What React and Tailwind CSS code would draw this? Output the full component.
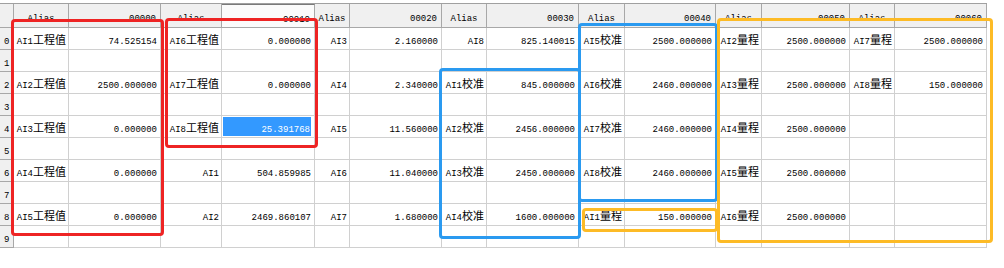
import React from "react";

const headers = ["Alias", "00000", "Alias", "00010", "Alias", "00020", "Alias", "00030", "Alias", "00040", "Alias", "00050", "Alias", "00060"];

const data = {
  0: ["AI1工程值", "74.525154", "AI6工程值", "0.000000", "AI3", "2.160000", "AI8", "825.140015", "AI5校准", "2500.000000", "AI2量程", "2500.000000", "AI7量程", "2500.000000"],
  2: ["AI2工程值", "2500.000000", "AI7工程值", "0.000000", "AI4", "2.340000", "AI1校准", "845.000000", "AI6校准", "2460.000000", "AI3量程", "2500.000000", "AI8量程", "150.000000"],
  4: ["AI3工程值", "0.000000", "AI8工程值", "25.391768", "AI5", "11.560000", "AI2校准", "2456.000000", "AI7校准", "2460.000000", "AI4量程", "2500.000000", "", ""],
  6: ["AI4工程值", "0.000000", "AI1", "504.859985", "AI6", "11.040000", "AI3校准", "2450.000000", "AI8校准", "2460.000000", "AI5量程", "2500.000000", "", ""],
  8: ["AI5工程值", "0.000000", "AI2", "2469.860107", "AI7", "1.680000", "AI4校准", "1600.000000", "AI1量程", "150.000000", "AI6量程", "2500.000000", "", ""],
};

function Txt({ s }) {
  const m = s.match(/^([A-Za-z0-9.]*)(.*)$/);
  return (
    <span className="whitespace-nowrap leading-none">
      <span className="text-[9px] font-['Liberation_Mono',monospace]">{m[1]}</span>
      {m[2] && (
        <span className="text-[11px] font-['Noto_Sans_CJK_SC',sans-serif]">{m[2]}</span>
      )}
    </span>
  );
}

const gridCols =
  "grid-cols-[14px_55px_92px_61px_93px_35px_92px_45px_92px_46px_91px_46px_88px_45px_92px]";

export default function App() {
  const rows = Array.from({ length: 10 }, (_, i) => i);
  return (
    <div className="relative w-[1004px] h-[268px] bg-white overflow-hidden text-black">
      <div className="pt-[3px] w-[987px]">
        <div className={`grid ${gridCols} border-t border-[#a0a0a0]`}>
          <div className="h-[24px] bg-[#f0f0f0] border-r border-b border-[#a8a8a8]" />
          {headers.map((h, i) => (
            <div
              key={i}
              className={`h-[24px] flex items-center border-r border-b border-[#a8a8a8] ${
                i === 3 ? "bg-[#fbfbfb] border-t border-t-[#7a7a7a]" : "bg-[#f0f0f0]"
              } ${h === "Alias" ? "justify-center" : "justify-end pr-[4px]"}`}
            >
              <Txt s={h} />
            </div>
          ))}
          {rows.map((r) => (
            <React.Fragment key={r}>
              <div className="h-[22px] flex items-center pl-[4px] bg-[#f0f0f0] border-r border-b border-[#a8a8a8]">
                <Txt s={String(r)} />
              </div>
              {headers.map((h, c) => {
                const v = data[r] ? data[r][c] : "";
                const selected = r === 4 && c === 3;
                return (
                  <div
                    key={c}
                    className={`h-[22px] flex items-center justify-end border-r border-b border-[#d0d0d0] ${
                      h === "Alias" ? "pr-[2px]" : "pr-[3px]"
                    }`}
                  >
                    {selected ? (
                      <div className="w-full h-[19px] bg-[#3399ff] text-white flex items-center justify-end pr-[1px] ml-[1px]">
                        <Txt s={v} />
                      </div>
                    ) : (
                      v && <Txt s={v} />
                    )}
                  </div>
                );
              })}
            </React.Fragment>
          ))}
        </div>
      </div>

      <div className="absolute left-[11px] top-[19px] w-[153px] h-[217px] rounded-[4px] border-[3px] border-[#ee2424]" />
      <div className="absolute left-[165px] top-[18px] w-[153px] h-[130px] rounded-[4px] border-[3px] border-[#ee2424]" />
      <div className="absolute left-[439px] top-[68px] w-[142px] h-[171px] rounded-[4px] border-[3px] border-[#2a9af0]" />
      <div className="absolute left-[578px] top-[23px] w-[140px] h-[179px] rounded-[4px] border-[3px] border-[#2a9af0]" />
      <div className="absolute left-[582px] top-[208px] w-[136px] h-[24px] rounded-[4px] border-[3px] border-[#fdbb26]" />
      <div className="absolute left-[717px] top-[18px] w-[276px] h-[225px] rounded-[4px] border-[3px] border-[#fdbb26]" />
    </div>
  );
}
